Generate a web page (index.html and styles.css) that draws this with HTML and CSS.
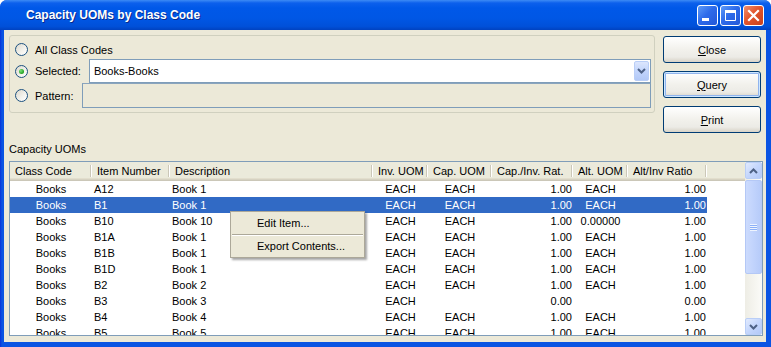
FILE: index.html
```html
<!DOCTYPE html>
<html lang="en">
<head>
    <meta charset="UTF-8">
    <meta name="viewport" content="width=device-width, initial-scale=1.0">
    <title>Capacity UOMs by Class Code</title>
    <link rel="stylesheet" href="styles.css">
</head>
<body>

<div class="window">
    <!-- Barra de titulo -->
    <div class="titlebar">
        <span class="title">Capacity UOMs by Class Code</span>
        <div class="caption-buttons">
            <span class="cap-btn">
                <svg width="19" height="19" viewBox="0 0 19 19"><rect x="4" y="12" width="7" height="3" fill="#fff"/></svg>
            </span>
            <span class="cap-btn">
                <svg width="19" height="19" viewBox="0 0 19 19"><path d="M4.5 5.5h10v9h-10z" fill="none" stroke="#fff" stroke-width="1"/><rect x="4" y="4" width="11" height="3" fill="#fff"/></svg>
            </span>
            <span class="cap-btn close">
                <svg width="19" height="19" viewBox="0 0 19 19"><path d="M5 5l9 9M14 5l-9 9" stroke="#fff" stroke-width="2.2" stroke-linecap="square"/></svg>
            </span>
        </div>
    </div>

    <div class="frame">
        <div class="client">
            <div class="top">
                <div class="groupbox">
                    <div class="opt-row row-all">
                        <span class="radio"></span>
                        <span class="opt-label">All Class Codes</span>
                    </div>
                    <div class="opt-row row-sel">
                        <span class="radio checked"></span>
                        <span class="opt-label">Selected:</span>
                        <div class="combo">
                            <span class="combo-text">Books-Books</span>
                            <span class="drop">
                                <svg width="9" height="6" viewBox="0 0 9 6"><path d="M1 1l3.5 3.5L8 1" fill="none" stroke="#4D6185" stroke-width="2"/></svg>
                            </span>
                        </div>
                    </div>
                    <div class="opt-row row-pat">
                        <span class="radio"></span>
                        <span class="opt-label">Pattern:</span>
                        <div class="field"></div>
                    </div>
                </div>

                <div class="buttons">
                    <button><u>C</u>lose</button>
                    <button class="default"><u>Q</u>uery</button>
                    <button><u>P</u>rint</button>
                </div>
            </div>

            <div class="list-label">Capacity UOMs</div>

            <div class="list">
                <div class="list-body">
                    <table>
                        <colgroup>
                            <col style="width:82px">
                            <col style="width:78px">
                            <col style="width:203px">
                            <col style="width:55px">
                            <col style="width:64px">
                            <col style="width:81px">
                            <col style="width:55px">
                            <col style="width:79px">
                            <col>
                        </colgroup>
                        <thead>
                            <tr>
                                <th>Class Code</th>
                                <th>Item Number</th>
                                <th>Description</th>
                                <th>Inv. UOM</th>
                                <th>Cap. UOM</th>
                                <th>Cap./Inv. Rat.</th>
                                <th>Alt. UOM</th>
                                <th>Alt/Inv Ratio</th>
                                <th class="filler"></th>
                            </tr>
                        </thead>
                        <tbody>
                            <tr>
                                <td class="c">Books</td><td>A12</td><td>Book 1</td><td class="c">EACH</td><td class="c">EACH</td><td class="r">1.00</td><td class="c">EACH</td><td class="r">1.00</td><td class="filler"></td>
                            </tr>
                            <tr class="selected">
                                <td class="c">Books</td><td>B1</td><td>Book 1</td><td class="c">EACH</td><td class="c">EACH</td><td class="r">1.00</td><td class="c">EACH</td><td class="r">1.00</td><td class="filler"></td>
                            </tr>
                            <tr>
                                <td class="c">Books</td><td>B10</td><td>Book 10</td><td class="c">EACH</td><td class="c">EACH</td><td class="r">1.00</td><td class="c">0.00000</td><td class="r">1.00</td><td class="filler"></td>
                            </tr>
                            <tr>
                                <td class="c">Books</td><td>B1A</td><td>Book 1</td><td class="c">EACH</td><td class="c">EACH</td><td class="r">1.00</td><td class="c">EACH</td><td class="r">1.00</td><td class="filler"></td>
                            </tr>
                            <tr>
                                <td class="c">Books</td><td>B1B</td><td>Book 1</td><td class="c">EACH</td><td class="c">EACH</td><td class="r">1.00</td><td class="c">EACH</td><td class="r">1.00</td><td class="filler"></td>
                            </tr>
                            <tr>
                                <td class="c">Books</td><td>B1D</td><td>Book 1</td><td class="c">EACH</td><td class="c">EACH</td><td class="r">1.00</td><td class="c">EACH</td><td class="r">1.00</td><td class="filler"></td>
                            </tr>
                            <tr>
                                <td class="c">Books</td><td>B2</td><td>Book 2</td><td class="c">EACH</td><td class="c">EACH</td><td class="r">1.00</td><td class="c">EACH</td><td class="r">1.00</td><td class="filler"></td>
                            </tr>
                            <tr>
                                <td class="c">Books</td><td>B3</td><td>Book 3</td><td class="c">EACH</td><td class="c"></td><td class="r">0.00</td><td class="c"></td><td class="r">0.00</td><td class="filler"></td>
                            </tr>
                            <tr>
                                <td class="c">Books</td><td>B4</td><td>Book 4</td><td class="c">EACH</td><td class="c">EACH</td><td class="r">1.00</td><td class="c">EACH</td><td class="r">1.00</td><td class="filler"></td>
                            </tr>
                            <tr>
                                <td class="c">Books</td><td>B5</td><td>Book 5</td><td class="c">EACH</td><td class="c">EACH</td><td class="r">1.00</td><td class="c">EACH</td><td class="r">1.00</td><td class="filler"></td>
                            </tr>
                        </tbody>
                    </table>
                </div>

                <div class="scrollbar">
                    <span class="sb-btn">
                        <svg width="9" height="6" viewBox="0 0 9 6"><path d="M1 5l3.5-3.5L8 5" fill="none" stroke="#4D6185" stroke-width="2"/></svg>
                    </span>
                    <div class="sb-track">
                        <div class="sb-thumb">
                            <span class="grip"></span>
                        </div>
                    </div>
                    <span class="sb-btn">
                        <svg width="9" height="6" viewBox="0 0 9 6"><path d="M1 1l3.5 3.5L8 1" fill="none" stroke="#4D6185" stroke-width="2"/></svg>
                    </span>
                </div>
            </div>
        </div>
    </div>

    <!-- Menu de contexto aberto sobre a lista -->
    <div class="menu">
        <div class="menu-item">Edit Item...</div>
        <div class="menu-sep"></div>
        <div class="menu-item">Export Contents...</div>
    </div>
</div>

</body>
</html>
```

FILE: styles.css
```css
body {
    margin: 0;
    padding: 0;
    background-color: #ffffff;
    font-family: "Liberation Sans", Arial, sans-serif;
    font-size: 11px;
    color: #000;
}
.window {
    position: relative;
    width: 771px;
    height: 347px;
    display: flex;
    flex-direction: column;
    overflow: hidden;
    border-radius: 7px 7px 0 0;
    background-color: #0A4FDC;
}

/* Barra de titulo azul estilo XP */
.titlebar {
    height: 30px;
    flex: none;
    display: flex;
    align-items: center;
    justify-content: space-between;
    padding: 0 7px 0 26px;
    background: linear-gradient(#3D8BF5 0, #0C60EC 3px, #0058E8 8px, #0057E5 60%, #0050D9 88%, #0042C0 100%);
}
.title {
    color: #fff;
    font-weight: bold;
    font-size: 12px;
    text-shadow: 1px 1px 0 #0A2A8C;
}
.caption-buttons {
    display: flex;
    gap: 2px;
    margin-top: 1px;
}
.cap-btn {
    width: 19px;
    height: 19px;
    border: 1px solid #fff;
    border-radius: 3px;
    display: flex;
    background: linear-gradient(135deg, #5E9BF8 0%, #2E6BEA 45%, #2358D8 100%);
}
.cap-btn.close {
    background: linear-gradient(135deg, #F09070 0%, #E2552D 45%, #C8401C 100%);
}

.frame {
    flex: 1;
    display: flex;
    padding: 0 5px 5px 4px;
    background: linear-gradient(to right, #0831D9, #0A54E3 2px, #0A54E3);
}
.client {
    flex: 1;
    background-color: #ECE9D8;
    padding: 5px 3px 6px 5px;
    display: flex;
    flex-direction: column;
}

/* Parte de cima: grupo de opcoes e botoes */
.top {
    display: flex;
    gap: 8px;
    height: 98px;
}
.groupbox {
    flex: 1;
    height: 78px;
    box-sizing: border-box;
    border: 1px solid #D0D0BF;
    border-radius: 3px;
    padding: 4px 3px 3px 5px;
    display: flex;
    flex-direction: column;
}
.opt-row {
    display: flex;
    align-items: center;
}
.row-all {
    height: 19px;
}
.row-sel {
    height: 24px;
}
.row-pat {
    height: 25px;
}
.radio {
    width: 13px;
    height: 13px;
    box-sizing: border-box;
    border: 1px solid #1C5180;
    border-radius: 50%;
    background: linear-gradient(135deg, #DCD8CC, #F4F3EE 60%, #FFFFFF);
    display: flex;
    align-items: center;
    justify-content: center;
    margin-right: 7px;
    flex: none;
}
.radio.checked::after {
    content: "";
    width: 5px;
    height: 5px;
    border-radius: 50%;
    background: radial-gradient(circle at 35% 35%, #7BE07A, #21A121 70%);
}
.opt-label {
    margin-right: 8px;
}
.combo {
    flex: 1;
    height: 24px;
    box-sizing: border-box;
    border: 1px solid #7F9DB9;
    background-color: #fff;
    display: flex;
    align-items: center;
    padding-left: 4px;
}
.combo-text {
    flex: 1;
}
.drop {
    width: 15px;
    height: 20px;
    margin-right: 1px;
    box-sizing: border-box;
    border: 1px solid #B9CEF7;
    border-radius: 2px;
    background: linear-gradient(#DCE6FD, #C2D5FC 50%, #B2C8F7);
    display: flex;
    align-items: center;
    justify-content: center;
}
.field {
    flex: 1;
    height: 25px;
    box-sizing: border-box;
    border: 1px solid #7F9DB9;
    border-top-color: #8AA4BD;
}

.buttons {
    width: 98px;
    margin-right: 2px;
    margin-top: 1px;
    display: flex;
    flex-direction: column;
    gap: 8px;
}
button {
    height: 27px;
    border: 1px solid #003C74;
    border-radius: 3px;
    background: linear-gradient(#FFFFFF, #F2F1EC 50%, #ECEBE6 80%, #D8D3C7);
    font-family: "Liberation Sans", Arial, sans-serif;
    font-size: 11px;
    color: #000;
    padding: 0;
}
button.default {
    box-shadow: inset 0 0 0 1px #CEE7FF, inset 0 0 0 2px #90B4EE;
}

.list-label {
    margin-top: 9px;
    height: 14px;
    line-height: 14px;
}

/* Lista com cabecalho e barra de rolagem */
.list {
    margin-top: 5px;
    height: 175px;
    box-sizing: border-box;
    border: 1px solid #7F9DB9;
    background-color: #fff;
    display: flex;
}
.list-body {
    width: 735px;
    overflow: hidden;
}
table {
    width: 735px;
    table-layout: fixed;
    border-collapse: collapse;
}
th {
    height: 19px;
    padding: 1px 0 2px 5px;
    box-sizing: border-box;
    text-align: left;
    font-weight: normal;
    white-space: nowrap;
    overflow: hidden;
    background:
        linear-gradient(to right, transparent calc(100% - 2px), #CBC7B8 calc(100% - 2px), #CBC7B8 calc(100% - 1px), #fff calc(100% - 1px)) right 3px / 100% 12px no-repeat,
        linear-gradient(#EBEADB 0, #EBEADB 16px, #E2DECD 16px, #E2DECD 17px, #D6D2C2 17px, #D6D2C2 18px, #CBC7B8 18px);
}
th.filler {
    background: linear-gradient(#EBEADB 0, #EBEADB 16px, #E2DECD 16px, #E2DECD 17px, #D6D2C2 17px, #D6D2C2 18px, #CBC7B8 18px);
}
td {
    height: 16px;
    padding: 0 2px;
    line-height: 16px;
    white-space: nowrap;
    overflow: hidden;
}
td.c {
    text-align: center;
}
td.r {
    text-align: right;
    padding-right: 1px;
}
.selected td {
    background-color: #316AC5;
    color: #fff;
}
.selected td.filler {
    background-color: #fff;
}

.scrollbar {
    width: 17px;
    display: flex;
    flex-direction: column;
    background: linear-gradient(to right, #EEEDE5, #FBFBF8);
}
.sb-btn {
    height: 17px;
    box-sizing: border-box;
    border: 1px solid #B9CEF7;
    border-radius: 2px;
    background: linear-gradient(135deg, #E2EBFE, #C4D6FC 50%, #B3C9F7);
    display: flex;
    align-items: center;
    justify-content: center;
    flex: none;
}
.sb-track {
    flex: 1;
}
.sb-thumb {
    margin-top: 1px;
    height: 94px;
    box-sizing: border-box;
    border: 1px solid #B4C8F6;
    border-radius: 2px;
    background: linear-gradient(to right, #CCDBFD, #C1D3FC 50%, #B6CBF9);
    display: flex;
    align-items: center;
    justify-content: center;
}
.grip {
    width: 7px;
    height: 7px;
    background: repeating-linear-gradient(#EEF4FE 0, #EEF4FE 1px, #8CB0F8 1px, #8CB0F8 2px);
}

/* Menu de contexto */
.menu {
    position: absolute;
    left: 230px;
    top: 211px;
    width: 135px;
    box-sizing: border-box;
    border: 1px solid #ACA899;
    background-color: #ECE9D8;
    padding: 1px;
    box-shadow: 2px 2px 2px rgba(0, 0, 0, 0.35);
}
.menu-item {
    height: 20px;
    line-height: 20px;
    padding-left: 25px;
}
.menu-sep {
    height: 3px;
    background: linear-gradient(transparent 1px, #ACA899 1px, #ACA899 2px, #fff 2px);
}
```
